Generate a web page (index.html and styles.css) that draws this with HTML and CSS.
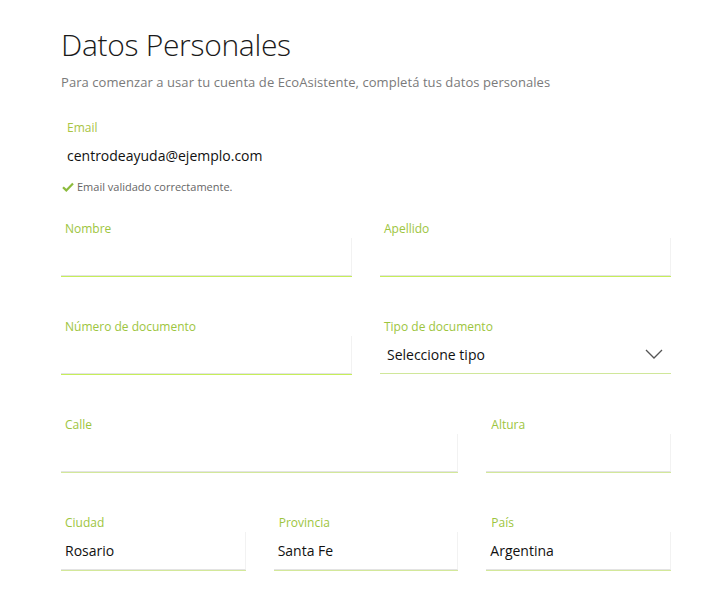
FILE: index.html
```html
<!DOCTYPE html>
<html lang="es">
<head>
<meta charset="utf-8">
<title>Datos Personales</title>
<link rel="stylesheet" href="styles.css">
</head>
<body>
<main class="page">
  <header class="header">
    <h1 class="title">Datos Personales</h1>
    <p class="subtitle">Para comenzar a usar tu cuenta de EcoAsistente, completá tus datos personales</p>
  </header>

  <section class="email">
    <div class="email-label">Email</div>
    <div class="email-value">centrodeayuda@ejemplo.com</div>
    <div class="email-ok">
      <svg class="check" width="12" height="10" viewBox="0 0 12 10"><path d="M1 5.2 L4.3 8.4 L11 1.4" fill="none" stroke="#8cbb3c" stroke-width="2.2"/></svg>
      <span>Email validado correctamente.</span>
    </div>
  </section>

  <form class="grid">
    <div class="field span6">
      <label class="label">Nombre</label>
      <div class="input strong"></div>
    </div>
    <div class="field span6">
      <label class="label">Apellido</label>
      <div class="input strong"></div>
    </div>
    <div class="field span6">
      <label class="label">Número de documento</label>
      <div class="input strong"></div>
    </div>
    <div class="field span6">
      <label class="label">Tipo de documento</label>
      <div class="select">
        <span>Seleccione tipo</span>
        <svg class="chevron" width="18" height="10" viewBox="0 0 18 10"><path d="M1 1 L9 9 L17 1" fill="none" stroke="#555" stroke-width="1.3"/></svg>
      </div>
    </div>
    <div class="field span8">
      <label class="label">Calle</label>
      <div class="input"></div>
    </div>
    <div class="field span4">
      <label class="label label-r">Altura</label>
      <div class="input"></div>
    </div>
    <div class="field span4">
      <label class="label">Ciudad</label>
      <div class="input">Rosario</div>
    </div>
    <div class="field span4">
      <label class="label label-r">Provincia</label>
      <div class="input">Santa Fe</div>
    </div>
    <div class="field span4">
      <label class="label label-r">País</label>
      <div class="input">Argentina</div>
    </div>
  </form>
</main>
</body>
</html>
```
FILE: styles.css
```css
* { box-sizing: border-box; }
html, body { margin: 0; padding: 0; background: #fff; }
body {
  font-family: "Open Sans", "Noto Sans", sans-serif;
  color: #111;
}
.page {
  width: 610px;
  margin-left: 61px;
  padding-top: 26px;
}
.title {
  margin: 0;
  font-size: 30px;
  font-weight: 300;
  line-height: 38px;
  color: #1a1a1a;
  letter-spacing: -0.3px;
}
.subtitle {
  margin: 9px 0 0;
  font-size: 13px;
  line-height: 18px;
  color: #7a7a7a;
  letter-spacing: 0.07px;
}
.email {
  padding-left: 6px;
  margin-top: 29px;
}
.email-label {
  font-size: 12px;
  line-height: 16px;
  color: #a9c443;
}
.email-value {
  margin-top: 10px;
  font-size: 14px;
  line-height: 20px;
  color: #111;
}
.email-ok {
  margin-top: 14px;
  display: flex;
  align-items: center;
  gap: 3px;
  font-size: 11px;
  line-height: 14px;
  color: #666;
  margin-left: -5px;
}
.check { display: block; }
.grid {
  display: grid;
  grid-template-columns: repeat(12, 1fr);
  column-gap: 28px;
  margin-top: 27px;
}
.span6 { grid-column: span 6; }
.span8 { grid-column: span 8; }
.span4 { grid-column: span 4; }
.field {
  display: flex;
  flex-direction: column;
  margin-bottom: 42px;
}
.label {
  padding-left: 4px;
  font-size: 12px;
  line-height: 16px;
  color: #9dc53e;
  margin-bottom: 1px;
}
.label-r { padding-left: 5px; }
.input {
  height: 38px;
  padding: 0 4px;
  display: flex;
  align-items: center;
  font-size: 14px;
  color: #111;
  border-right: 1px solid #f2f2f2;
  border-bottom: 1px solid #e3e3e3;
  box-shadow: 0 1px 0 #d3e89a;
  margin-bottom: 1px;
}
.input.strong {
  box-shadow: 0 1px 0 #c6ee5a;
}
.select {
  height: 38px;
  padding: 0 8px 0 7px;
  display: flex;
  align-items: center;
  justify-content: space-between;
  font-size: 14px;
  color: #111;
  border-bottom: 1px solid #d0e79a;
  margin-bottom: 1px;
}
.chevron { display: block; margin-top: -1px; }
```
